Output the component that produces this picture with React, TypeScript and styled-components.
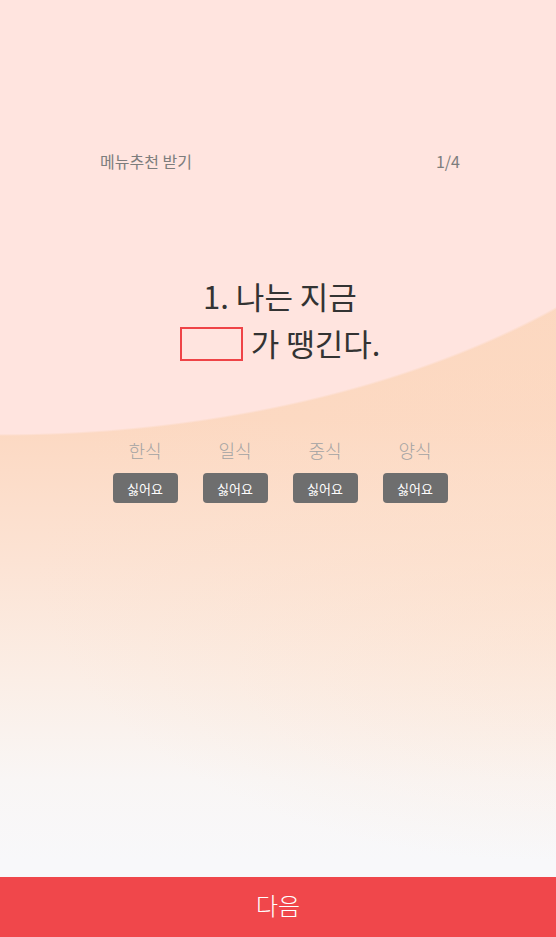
import React from "react";
import styled, { createGlobalStyle } from "styled-components";

const GlobalStyle = createGlobalStyle`
  html, body { margin: 0; padding: 0; }
  body {
    font-family: "Noto Sans CJK KR", "Noto Sans", sans-serif;
    -webkit-font-smoothing: antialiased;
  }
  * { box-sizing: border-box; }
`;

const Page = styled.div`
  position: relative;
  min-height: 100vh;
  display: flex;
  flex-direction: column;
  overflow: hidden;
  background:
    radial-gradient(ellipse 790px 436px at 0 0, #ffe4df 99.5%, rgba(255, 228, 223, 0) 100%),
    radial-gradient(ellipse 520px 300px at 100% 60%, rgba(253, 222, 200, 0.5) 0%, rgba(253, 222, 200, 0) 100%),
    linear-gradient(180deg, #fcd6bd 0px, #fcd8c1 420px, #fce3d4 560px, #fbeee6 680px, #f9f6f5 780px, #f8f8fa 860px);
`;

const Content = styled.main`
  flex: 1;
  width: 360px;
  margin: 0 auto;
  padding-left: 4px;
  box-sizing: content-box;
  display: flex;
  flex-direction: column;
`;

const Header = styled.header`
  margin-top: 149px;
  display: flex;
  justify-content: space-between;
  align-items: center;
  font-size: 16px;
  line-height: 24px;
  font-weight: 400;
  color: #7d7d7d;
`;

const Title = styled.h1`
  margin: 99px 0 0;
  text-align: center;
  font-size: 31px;
  line-height: 47px;
  font-weight: 400;
  color: #333333;
`;

const Blank = styled.span`
  display: inline-block;
  width: 63px;
  height: 34px;
  border: 2px solid #ef4347;
  vertical-align: middle;
  margin: -8px 8px 0 0;
`;

const Choices = styled.div`
  margin-top: 72px;
  display: flex;
  justify-content: center;
  gap: 25px;
`;

const Choice = styled.div`
  width: 65px;
  display: flex;
  flex-direction: column;
  align-items: center;
  gap: 11px;
`;

const ChoiceLabel = styled.span`
  font-size: 18px;
  line-height: 24px;
  font-weight: 300;
  color: #a3a3a3;
`;

const DislikeButton = styled.button`
  width: 65px;
  height: 30px;
  border: none;
  border-radius: 4px;
  background: #6e6e6e;
  color: #ffffff;
  font-family: inherit;
  font-size: 13px;
  padding: 0;
  cursor: pointer;
`;

const NextButton = styled.button`
  width: 100%;
  height: 60px;
  border: none;
  background: #f0474b;
  color: #ffffff;
  font-family: inherit;
  font-size: 24px;
  font-weight: 300;
  line-height: 1;
  padding: 0 0 4px;
  cursor: pointer;
`;

const categories = ["한식", "일식", "중식", "양식"];

export default function App() {
  return (
    <>
      <GlobalStyle />
      <Page>
        <Content>
          <Header>
            <span>메뉴추천 받기</span>
            <span>1/4</span>
          </Header>
          <Title>
            1. 나는 지금
            <br />
            <Blank />가 땡긴다.
          </Title>
          <Choices>
            {categories.map((c) => (
              <Choice key={c}>
                <ChoiceLabel>{c}</ChoiceLabel>
                <DislikeButton>싫어요</DislikeButton>
              </Choice>
            ))}
          </Choices>
        </Content>
        <NextButton>다음</NextButton>
      </Page>
    </>
  );
}
